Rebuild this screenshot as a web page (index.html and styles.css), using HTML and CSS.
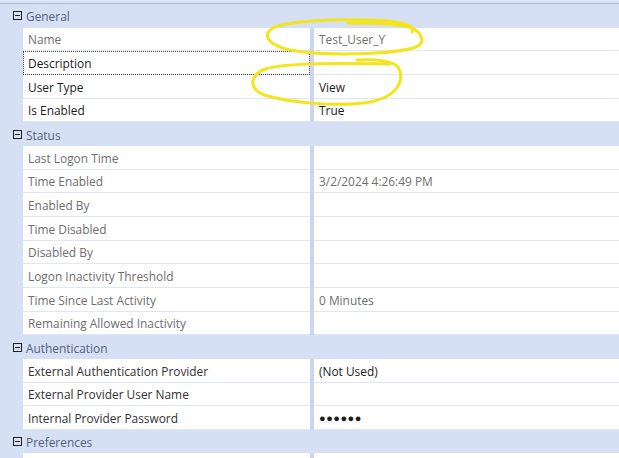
FILE: index.html
```html
<!DOCTYPE html>
<html lang="en">
<head>
  <meta charset="UTF-8">
  <title>User Properties</title>
  <link rel="stylesheet" href="styles.css">
</head>
<body>

<div class="grid">

  <!-- General -->
  <div class="cat"><span class="toggle"></span><span class="cat-title">General</span><span class="div"></span><span></span></div>
  <div class="row ro"><span class="gut"></span><span class="name">Name</span><span class="div"></span><span class="val">Test_User_Y</span></div>
  <div class="row"><span class="gut"></span><span class="name focus">Description</span><span class="div"></span><span class="val"></span></div>
  <div class="row"><span class="gut"></span><span class="name">User Type</span><span class="div"></span><span class="val">View</span></div>
  <div class="row"><span class="gut"></span><span class="name">Is Enabled</span><span class="div"></span><span class="val">True</span></div>

  <!-- Status -->
  <div class="cat"><span class="toggle"></span><span class="cat-title">Status</span><span class="div"></span><span></span></div>
  <div class="row ro"><span class="gut"></span><span class="name">Last Logon Time</span><span class="div"></span><span class="val"></span></div>
  <div class="row ro"><span class="gut"></span><span class="name">Time Enabled</span><span class="div"></span><span class="val">3/2/2024 4:26:49 PM</span></div>
  <div class="row ro"><span class="gut"></span><span class="name">Enabled By</span><span class="div"></span><span class="val"></span></div>
  <div class="row ro"><span class="gut"></span><span class="name">Time Disabled</span><span class="div"></span><span class="val"></span></div>
  <div class="row ro"><span class="gut"></span><span class="name">Disabled By</span><span class="div"></span><span class="val"></span></div>
  <div class="row ro"><span class="gut"></span><span class="name">Logon Inactivity Threshold</span><span class="div"></span><span class="val"></span></div>
  <div class="row ro"><span class="gut"></span><span class="name">Time Since Last Activity</span><span class="div"></span><span class="val">0 Minutes</span></div>
  <div class="row ro"><span class="gut"></span><span class="name">Remaining Allowed Inactivity</span><span class="div"></span><span class="val"></span></div>

  <!-- Authentication -->
  <div class="cat"><span class="toggle"></span><span class="cat-title">Authentication</span><span class="div"></span><span></span></div>
  <div class="row mid"><span class="gut"></span><span class="name">External Authentication Provider</span><span class="div"></span><span class="val">(Not Used)</span></div>
  <div class="row mid"><span class="gut"></span><span class="name">External Provider User Name</span><span class="div"></span><span class="val"></span></div>
  <div class="row mid"><span class="gut"></span><span class="name">Internal Provider Password</span><span class="div"></span><span class="val pw">&#9679;&#9679;&#9679;&#9679;&#9679;&#9679;</span></div>

  <!-- Preferences -->
  <div class="cat"><span class="toggle"></span><span class="cat-title">Preferences</span><span class="div"></span><span></span></div>
  <div class="row"><span class="gut"></span><span class="name"></span><span class="div"></span><span class="val"></span></div>

  <!-- highlighter marks drawn over the grid -->
  <svg class="marks" width="619" height="458" viewBox="0 0 619 458">
    <path d="M412,31 C416,24 400,20 370,19 C330,18 287,20 273,27 C262,33 267,44 290,49 C322,55 392,54 416,46 C426,42 423,31 409,26 C394,22 370,22 348,22"/>
    <path d="M357,59 C376,58 394,60 398,66 C405,78 399,95 370,101 C340,106 290,102 264,94 C248,87 250,74 265,68 C285,62 330,62 390,63"/>
  </svg>
</div>

</body>
</html>
```

FILE: styles.css
```css
body {
  margin: 0;
  padding: 0;
  background-color: #d5e0f5;
  font-family: 'Open Sans', 'Liberation Sans', sans-serif;
  font-size: 11.9px;
  overflow: hidden;
}

.grid {
  position: relative;
  height: 458px;
  padding-top: 3px;
  border-top: 1px solid #e6edf9;
  box-sizing: border-box;
  background-color: #d5e0f5;
}

.grid::before {
  content: "";
  display: block;
  height: 1px;
  margin-top: -1px;
  background-color: #a9bde7;
}

.cat,
.row {
  display: grid;
  grid-template-columns: 23px 287px 4px 1fr;
  height: 23.67px;
}

.cat {
  align-items: center;
  color: #56607a;
}

.cat-title {
  padding-left: 3px;
  padding-top: 1px;
}

.toggle {
  justify-self: end;
  width: 7px;
  height: 7px;
  margin-right: 1px;
  border: 1px solid #1f1f1f;
  background: linear-gradient(#1f1f1f, #1f1f1f) center / 5px 1px no-repeat;
}

.div {
  background-color: #c9d6f0;
}

.row .name,
.row .val {
  display: flex;
  align-items: center;
  padding-left: 5px;
  padding-top: 1px;
  background-color: #fff;
  border-bottom: 1px solid #dfe6f4;
  color: #1b1b1b;
  white-space: nowrap;
  box-sizing: border-box;
}

.row.ro .name,
.row.ro .val {
  color: #6e6e6e;
}

.row.mid .name {
  color: #333;
}

.row .focus {
  outline: 1px dotted #444;
  outline-offset: -1px;
}

.pw {
  font-size: 11px;
  letter-spacing: 0.5px;
  padding-top: 3px;
}

.marks {
  position: absolute;
  top: 0;
  left: 0;
  pointer-events: none;
}

.marks path {
  fill: none;
  stroke: #f4e41c;
  stroke-width: 3;
  stroke-linecap: round;
}
```
